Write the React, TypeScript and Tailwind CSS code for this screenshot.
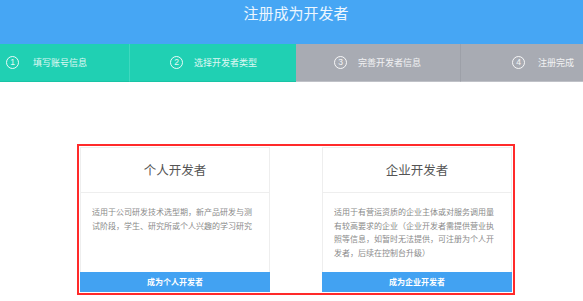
import React from "react";

const font = { fontFamily: '"Noto Sans CJK SC", "Noto Sans", sans-serif' };

type Step = { n: number; label: string; w: string; pl: string; gap: string; active: boolean; divider: boolean };

const steps: Step[] = [
  { n: 1, label: "填写账号信息", w: "w-[130px]", pl: "pl-[6px]", gap: "gap-[14px]", active: true, divider: true },
  { n: 2, label: "选择开发者类型", w: "w-[166px]", pl: "pl-[40px]", gap: "gap-[11px]", active: true, divider: false },
  { n: 3, label: "完善开发者信息", w: "w-[165px]", pl: "pl-[38px]", gap: "gap-[11px]", active: false, divider: true },
  { n: 4, label: "注册完成", w: "w-[131px]", pl: "pl-[51px]", gap: "gap-[13px]", active: false, divider: false },
];

function StepItem({ s }: { s: Step }) {
  const bg = s.active ? "bg-[#20d0b3] border-b-[#19c4a5]" : "bg-[#a8abb3] border-b-[#bfc1c7]";
  const div = s.divider
    ? s.active
      ? "border-r border-r-[#3fd8bf]"
      : "border-r border-r-[#9da0a8]"
    : "";
  return (
    <div className={`${s.w} ${s.pl} ${bg} ${div} h-[38px] border-b flex items-center shrink-0`}>
      <div className={`flex items-center ${s.gap}`}>
        <div className="w-[13px] h-[13px] rounded-full border border-white/90 flex items-center justify-center text-[8.5px] leading-none text-white/90" style={{ fontFamily: '"Liberation Sans", sans-serif' }}>
          {s.n}
        </div>
        <span className="text-[9px] leading-none text-white/85 whitespace-nowrap">{s.label}</span>
      </div>
    </div>
  );
}

function Card({ title, lines, button }: { title: string; lines: string[]; button: string }) {
  return (
    <div className="w-[190px] h-[145px] flex flex-col">
      <div className="flex-1 flex flex-col border border-b-0 border-[#eeeeee]">
        <div className="h-[45px] border-b border-[#eeeeee] flex items-center justify-center text-[12.5px] text-[#555555]">
          {title}
        </div>
        <div className="pl-[11px] pt-[12px] text-[8px] leading-[13.5px] text-[#8a8a8a]">
          {lines.map((l, i) => (
            <div key={i} className="whitespace-nowrap">{l}</div>
          ))}
        </div>
      </div>
      <div className="h-[20px] bg-[#42a2f2] flex items-center justify-center text-[8px] font-bold text-white">
        {button}
      </div>
    </div>
  );
}

export default function App() {
  return (
    <div className="w-[583px] h-[301px] overflow-hidden bg-white" style={font}>
      <div className="w-[592px]">
        <div className="h-[44px] bg-[#46a6f4] pt-[4px] text-center text-[15px] leading-[17px] text-white/90">
          注册成为开发者
        </div>
        <div className="flex">
          {steps.map((s) => (
            <StepItem key={s.n} s={s} />
          ))}
        </div>
        <div className="flex justify-center pt-[62px]">
          <div className="border-2 border-[#ff2a2a] p-px flex gap-[52px]">
            <Card
              title="个人开发者"
              lines={["适用于公司研发技术选型期，新产品研发与测", "试阶段，学生、研究所或个人兴趣的学习研究"]}
              button="成为个人开发者"
            />
            <Card
              title="企业开发者"
              lines={[
                "适用于有营运资质的企业主体或对服务调用量",
                "有较高要求的企业（企业开发者需提供营业执",
                "照等信息，如暂时无法提供，可注册为个人开",
                "发者，后续在控制台升级）",
              ]}
              button="成为企业开发者"
            />
          </div>
        </div>
      </div>
    </div>
  );
}
